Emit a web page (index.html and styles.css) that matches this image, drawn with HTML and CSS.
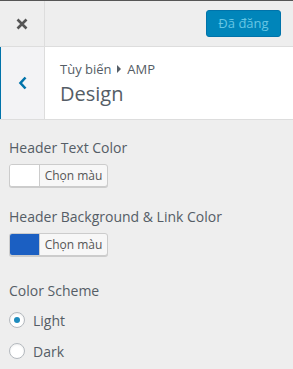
FILE: index.html
```html
<!doctype html>
<html lang="vi">

<head>
  <meta charset="UTF-8" />
  <meta name="viewport" content="width=device-width, initial-scale=1.0" />
  <title>Tùy biến: Design</title>
  <link rel="stylesheet" href="styles.css">
</head>

<body>
  <div class="customizer">
    <!-- Top actions -->
    <div class="actions">
      <button class="close" type="button" aria-label="Đóng">
        <svg width="12" height="12" viewBox="0 0 12 12">
          <path d="M1.5 1.5 L10.5 10.5 M10.5 1.5 L1.5 10.5" stroke="#555" stroke-width="2.6" fill="none" />
        </svg>
      </button>
      <button class="publish" type="button" disabled>Đã đăng</button>
    </div>

    <!-- Section header -->
    <div class="section-header">
      <button class="back" type="button" aria-label="Quay lại">
        <svg width="10" height="14" viewBox="0 0 10 14">
          <path d="M7.5 1.5 L2.5 7 L7.5 12.5" stroke="#0073aa" stroke-width="2.6" fill="none" />
        </svg>
      </button>
      <div class="section-title">
        <span class="crumbs">Tùy biến <span class="arrow"></span> AMP</span>
        <h3>Design</h3>
      </div>
    </div>

    <!-- Controls -->
    <ul class="controls">
      <li class="control">
        <span class="control-title">Header Text Color</span>
        <button class="color-picker" type="button">
          <span class="swatch" style="background: #fff"></span>
          <span class="picker-label">Chọn màu</span>
        </button>
      </li>
      <li class="control">
        <span class="control-title">Header Background &amp; Link Color</span>
        <button class="color-picker" type="button">
          <span class="swatch" style="background: #1b5fc2"></span>
          <span class="picker-label">Chọn màu</span>
        </button>
      </li>
      <li class="control scheme">
        <span class="control-title">Color Scheme</span>
        <label class="radio"><input type="radio" name="scheme" checked> Light</label>
        <label class="radio"><input type="radio" name="scheme"> Dark</label>
      </li>
    </ul>
  </div>
</body>

</html>
```

FILE: styles.css
```css
* {
  margin: 0;
  padding: 0;
  box-sizing: border-box;
}

html,
body {
  height: 100%;
  overflow: hidden;
}

body {
  background: #eee;
  color: #555d66;
  font-family: "Open Sans", "Noto Sans", sans-serif;
  font-size: 13px;
}

button {
  font-family: inherit;
}

/* Top actions */
.actions {
  display: flex;
  align-items: center;
  justify-content: space-between;
  height: 47px;
  border-top: 1px solid #555;
  border-bottom: 1px solid #ddd;
}

.close {
  display: flex;
  align-items: center;
  justify-content: center;
  width: 45px;
  height: 100%;
  background: transparent;
  border: none;
  border-right: 1px solid #ddd;
}

.publish {
  width: 75px;
  height: 27px;
  margin-right: 12px;
  background: #0085ba;
  border: 1px solid #0073aa;
  border-radius: 3px;
  color: #66c6e4;
  font-size: 13px;
  line-height: 25px;
}

/* Section header */
.section-header {
  display: flex;
  background: #fff;
  border-bottom: 1px solid #ddd;
}

.back {
  display: flex;
  align-items: center;
  justify-content: center;
  width: 45px;
  background: #f3f3f5;
  border: none;
  border-left: 1px solid #0073aa;
  border-right: 1px solid #ddd;
}

.section-title {
  display: flex;
  flex-direction: column;
  padding: 13px 0 12px 15px;
}

.crumbs {
  font-size: 13px;
  line-height: 18px;
}

.arrow {
  display: inline-block;
  width: 0;
  height: 0;
  margin: 0 3px 1px 2px;
  border-top: 4px solid transparent;
  border-bottom: 4px solid transparent;
  border-left: 4px solid #555d66;
}

.section-title h3 {
  margin-top: 2px;
  font-size: 20px;
  font-weight: 400;
  line-height: 27px;
  color: #555d66;
}

/* Controls */
.controls {
  list-style: none;
  padding: 18px 9px 0;
}

.control {
  display: flex;
  flex-direction: column;
  align-items: flex-start;
  margin-bottom: 20px;
}

.control-title {
  font-size: 14px;
  line-height: 19px;
  margin-bottom: 7px;
}

.color-picker {
  display: flex;
  height: 23px;
  width: 99px;
  background: #f7f7f7;
  border: 1px solid #ccc;
  border-radius: 3px;
  box-shadow: 0 1px 0 #ccc;
  overflow: hidden;
}

.swatch {
  width: 30px;
  height: 100%;
  border-right: 1px solid #ccc;
}

.picker-label {
  flex: 1;
  font-size: 12px;
  line-height: 21px;
  color: #555;
  text-align: center;
}

.scheme {
  margin-top: 25px;
  margin-bottom: 0;
}

.scheme .control-title {
  margin-bottom: 12px;
}

.radio {
  display: flex;
  align-items: center;
  gap: 8px;
  height: 16px;
  font-size: 14px;
}

.radio + .radio {
  margin-top: 15px;
}

.radio input {
  appearance: none;
  display: flex;
  align-items: center;
  justify-content: center;
  width: 16px;
  height: 16px;
  background: #fff;
  border: 1px solid #b4b9be;
  border-radius: 50%;
  box-shadow: inset 0 1px 2px rgba(0, 0, 0, 0.07);
}

.radio input:checked::before {
  content: "";
  width: 6px;
  height: 6px;
  border-radius: 50%;
  background: #1e8cbe;
}
```
